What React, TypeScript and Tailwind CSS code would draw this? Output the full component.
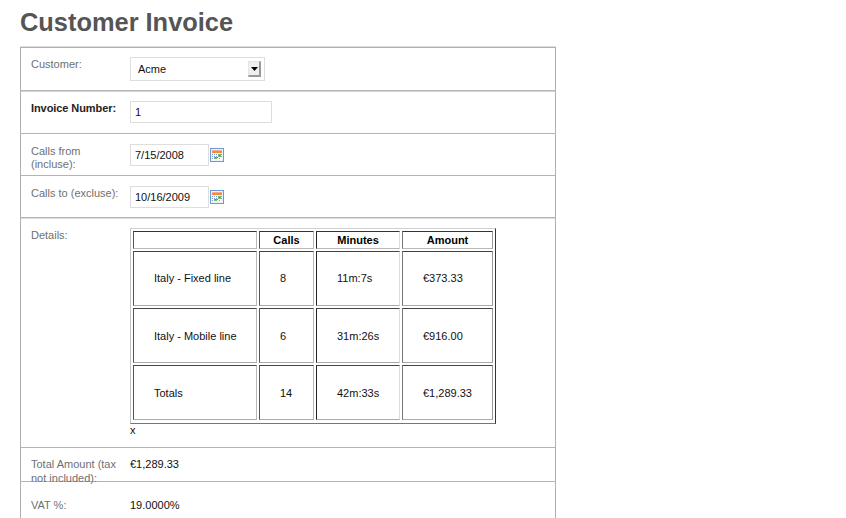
import React from "react";

function CalendarIcon() {
  return (
    <svg width="14" height="14" viewBox="0 0 14 14" className="ml-[1px] shrink-0">
      <rect x="0.5" y="0.5" width="13" height="13" fill="#eaf2fd" stroke="#6d9ad4" />
      <rect x="2" y="2" width="10" height="3" fill="#f2894c" />
      <rect x="2" y="2" width="10" height="1" fill="#f9ad7c" />
      <path d="M2 6h10v4l-2 2H2z" fill="#fff" />
      <path d="M2 6h1v1H2zM4 6h1v1H4zM6 6h1v1H6zM2 8h1v1H2zM4 8h1v1H4zM6 8h1v1H6zM2 10h1v1H2zM9 10h1v1H9zM11 8h1v1h-1zM11 6h1v1h-1z" fill="#7f9ed8" />
      <path d="M8 6h3v3H8zM4 9h3v2H4z" fill="#76bd74" />
      <path d="M9 7h1v1H9zM5 9h1v1H5zM7 9h1v1H7z" fill="#3b9142" />
    </svg>
  );
}

type RowProps = {
  label: string;
  height: string;
  bold?: boolean;
  labelPad?: string;
  pad?: string;
  leading?: string;
  line?: string;
  children: React.ReactNode;
};

function Row({ label, height, bold, labelPad = "pt-[11px]", pad = "pt-[10px]", leading = "leading-[13px]", line = "border-[#b4b4b4]", children }: RowProps) {
  return (
    <div className={`flex border-b pl-[10px] ${height} ${line}`}>
      <div className={`w-[99px] shrink-0 pr-[8px] ${labelPad} ${leading} ${bold ? "font-bold tracking-[-0.08px] text-[#222]" : "text-[#707070]"}`}>{label}</div>
      <div className={pad}>{children}</div>
    </div>
  );
}

const field = "flex items-center border border-[#dedede] pl-[4px]";

const lines = [
  ["Italy - Fixed line", "8", "11m:7s", "€373.33"],
  ["Italy - Mobile line", "6", "31m:26s", "€916.00"],
  ["Totals", "14", "42m:33s", "€1,289.33"],
];

const linePads = ["", "pt-[2px]", "pt-[2px]"];

const cellBorders = [
  "border-l-[#555] border-r-[#b8b8b8]",
  "border-l-[#555] border-r-[#b8b8b8]",
  "border-l-[#222] border-r-[#dcdcdc]",
  "border-l-[#777] border-r-[#999]",
];

export default function App() {
  return (
    <div className="h-[518px] overflow-hidden bg-white pl-[20px] font-['Liberation_Sans',Arial,sans-serif] text-[11px] text-[#111]">
      <h1 className="h-[47px] pt-[7px] text-[25.4px] leading-[30px] font-bold text-[#555]">Customer Invoice</h1>
      <div className="h-[500px] w-[536px] border border-[#b0b0b0] shadow-[0_-1px_0_#dedede]">
        <Row label="Customer:" height="h-[43px]" labelPad="pt-[10px]" pad="pt-[9px]" line="border-[#b8b8b8] shadow-[0_1px_0_#d4d4d4]">
          <div className="flex h-[24px] w-[135px] items-center justify-between border border-[#dedede] pr-[3px] pl-[7px]">
            <span>Acme</span>
            <span className="flex h-[16px] w-[13px] items-center justify-center border-t border-r-2 border-b-2 border-l border-t-[#e4e4e4] border-r-[#999] border-b-[#999] border-l-[#e4e4e4] bg-[#f0f0f0]">
              <svg width="7" height="4" viewBox="0 0 7 4"><path d="M0 0h7L3.5 4z" fill="#000" /></svg>
            </span>
          </div>
        </Row>
        <Row label="Invoice Number:" height="h-[43px]" bold>
          <div className={`${field} h-[22px] w-[142px]`}>1</div>
        </Row>
        <Row label="Calls from (incluse):" height="h-[42px]">
          <div className="flex items-center">
            <div className={`${field} h-[22px] w-[79px]`}>7/15/2008</div>
            <CalendarIcon />
          </div>
        </Row>
        <Row label="Calls to (excluse):" height="h-[42px]" line="border-[#b4b4b4] shadow-[0_1px_0_#dedede]">
          <div className="flex items-center">
            <div className={`${field} h-[22px] w-[79px]`}>10/16/2009</div>
            <CalendarIcon />
          </div>
        </Row>
        <Row label="Details:" height="h-[230px]">
          <div className="grid h-[196px] w-[366px] grid-cols-[124px_55px_84px_91px] grid-rows-[18px_55px_55px_55px] gap-[2px] border border-t-[#d0d0d0] border-r-[#333] border-b-[#777] border-l-[#c4c4c4] pt-[2px] pl-[2px]">
            {["", "Calls", "Minutes", "Amount"].map((h, i) => (
              <div key={h} className={`flex items-center justify-center border border-t-[#333] border-b-[#b8b8b8] font-bold text-black ${cellBorders[i]}`}>{h}</div>
            ))}
            {lines.flatMap((cells, r) =>
              cells.map((c, i) => (
                <div key={`${r}-${i}`} className={`flex items-center border border-t-[#444] border-b-[#aaa] pl-[20px] whitespace-nowrap ${linePads[r]} ${cellBorders[i]}`}>{c}</div>
              ))
            )}
          </div>
          <div className="leading-[13px]">x</div>
        </Row>
        <Row label="Total Amount (tax not included):" height="h-[34px]" labelPad="pt-[9px]" pad="pt-[9px]" leading="leading-[14px]">
          <div className="leading-[14px]">€1,289.33</div>
        </Row>
        <Row label="VAT %:" height="h-[60px]" labelPad="pt-[17px]" pad="pt-[17px]">
          <div className="leading-[13px]">19.0000%</div>
        </Row>
      </div>
    </div>
  );
}
